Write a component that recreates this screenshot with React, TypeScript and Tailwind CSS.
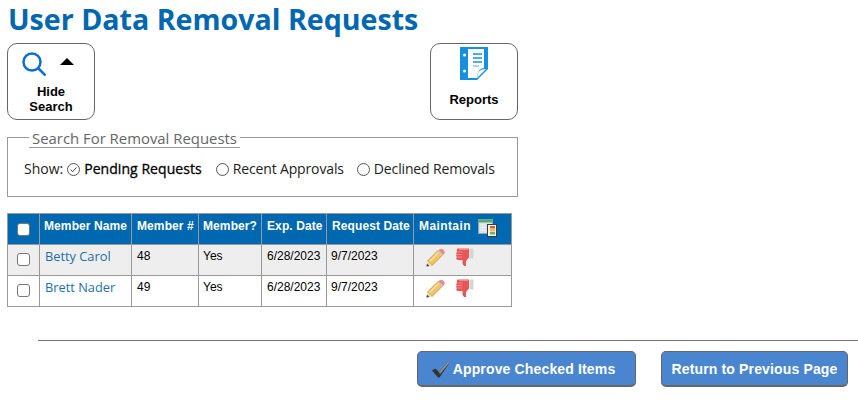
import React from "react";

const FilterOption = ({ label, checked }: { label: string; checked?: boolean }) => (
  <span className="flex items-center">
    <span className="relative w-[13px] h-[13px] rounded-full border border-[#555] mr-[4px] flex items-center justify-center">
      {checked && (
        <svg viewBox="0 0 13 13" className="absolute -left-px -top-px w-[13px] h-[13px]">
          <path d="M3.6 6.6l2 2.2 3.9-4.4" fill="none" stroke="#444" strokeWidth="1" />
        </svg>
      )}
    </span>
    <span className={checked ? "text-black [-webkit-text-stroke:0.3px_black] tracking-[0.05px]" : "text-[#222] tracking-[-0.14px]"}>{label}</span>
  </span>
);

const Pencil = () => (
  <svg viewBox="0 0 19 19" className="w-[19px] h-[19px]">
    <path d="M1.500 13L12 2.500l4.500 4.500L6 17.500z" fill="#f3c364" stroke="#b98a3a" strokeWidth="0.8" />
    <path d="M3.500 13.500L13 4" stroke="#fbe3a8" strokeWidth="1.400" />
    <path d="M13.500 1.500c1-1 2.500-1 3.500 0l1 1c1 1 1 2.500 0 3.500l-1 1-4.500-4.500z" fill="#ee8a8a" />
    <path d="M11.800 2.800l4.500 4.500" stroke="#c8c8c8" strokeWidth="1.600" />
    <path d="M1.500 13L.5 18.500 6 17.500z" fill="#ead9b4" />
    <path d="M1 15.800L.5 18.500l2.800-.5z" fill="#333" />
  </svg>
);

const ThumbDown = () => (
  <svg viewBox="0 0 18 19" className="w-[18px] h-[19px]">
    <path d="M13.500 0.500h4v10h-4z" fill="#d4d6d4" />
    <path d="M1.500 0.500H13V9.500l-3 3.500V18H8.500c-1.200-.5-2-1.700-2-3V12H2c-1.200 0-2-1-1.600-2l.4-1C0 8 0 7 .7 6.500 0 5.500.2 4.500 1 4c-.5-1-.2-2.500.5-3.500z" fill="#e85656" />
    <path d="M1.500 4h5M1 6.500h5M1 9h5" stroke="#f39a9a" strokeWidth="0.8" />
    <path d="M3 1.500h9" stroke="#f28c8c" strokeWidth="1" />
  </svg>
);

const ReportIcon = () => (
  <svg viewBox="0 0 28 33" className="w-[28px] h-[33px]">
    <path d="M0 0h28v22L17 33H0z" fill="#1590e3" />
    <path d="M8 2h16v19c-4 0-7 4-7 10H8z" fill="#fff" />
    <path d="M17 31c0-6 3-9 9-9z" fill="#fff" />
    <circle cx="4.500" cy="8" r="1.500" fill="#fff" />
    <circle cx="4.500" cy="24" r="1.500" fill="#fff" />
    <path d="M13 7h9M13 11h9M13 15h9" stroke="#1590e3" strokeWidth="1.500" />
    <path d="M13 19h6" stroke="#8cc8f0" strokeWidth="1.500" />
  </svg>
);

const TableIcon = () => (
  <svg viewBox="0 0 19 18" className="w-[19px] h-[18px]">
    <rect x="0.500" y="0.500" width="14" height="14" fill="#d5e2ea" stroke="#8fa8b5" />
    <rect x="0.500" y="0.500" width="14" height="3" fill="#58a868" />
    <path d="M2.500 6h5M2.500 8.500h5M2.500 11h5" stroke="#f4f8fa" strokeWidth="1" />
    <rect x="9.500" y="5.500" width="9" height="12" fill="#f3f3e8" stroke="#3a3a3a" />
    <rect x="12" y="7" width="5" height="2.500" fill="#d9584f" />
    <rect x="12" y="10" width="5" height="2.500" fill="#eec440" />
    <rect x="12" y="13" width="5" height="2.500" fill="#6db36c" />
  </svg>
);

const CheckMark = () => (
  <svg viewBox="0 0 18 17" className="w-[18px] h-[17px]">
    <path d="M0 9.500l3.500-2 3.500 3.500L16.500 0 18 1 7.500 16.500H6z" fill="#333" />
    <path d="M7 11L16.500 0 18 1 8 13z" fill="#8f8f8f" />
  </svg>
);

const Box = () => (
  <span className="block w-[13px] h-[13px] rounded-[3px] border border-[#767676] bg-white" />
);

const rows = [
  { name: "Betty Carol", num: "48", shaded: true },
  { name: "Brett Nader", num: "49", shaded: false },
];

const th = "border border-[#999] align-top text-left font-bold text-white text-[12px] tracking-[0.1px] leading-[14px] whitespace-nowrap pt-[5px] px-[4px]";
const td = "border border-[#999] align-top text-black text-[12px] leading-[14px] pt-[4px] px-[5px]";

export default function App() {
  return (
    <div className="w-[858px] h-[409px] bg-white overflow-hidden font-['Liberation_Sans',sans-serif]">
      <h1 className="pl-[8px] h-[43px] font-['Open_Sans',sans-serif] font-bold text-[28.6px] leading-[38px] whitespace-nowrap text-[#0067b1]">
        User Data Removal Requests
      </h1>

      <div className="flex justify-between w-[511px] ml-[7px] h-[77px]">
        <button className="w-[88px] h-[77px] rounded-[10px] border border-[#666] flex flex-col items-center text-[13px] leading-[15px] font-bold text-black">
          <span className="flex items-center h-[36px] mt-[2px] ml-[-7px]">
            <svg viewBox="0 0 24 24" className="w-[24px] h-[24px]" fill="none" stroke="#0b6fd0" strokeWidth="2.500">
              <circle cx="10" cy="10" r="8.500" />
              <path d="M15.500 15.500L23.500 23.500" />
            </svg>
            <span className="ml-[14px] mb-[5px] w-0 h-0 border-x-[7.500px] border-x-transparent border-b-[7px] border-b-black" />
          </span>
          <span className="mt-[2px]">Hide<br />Search</span>
        </button>
        <button className="w-[88px] h-[77px] rounded-[10px] border border-[#666] flex flex-col items-center text-[13px] leading-[15px] font-bold text-black">
          <span className="mt-[3px] h-[33px]"><ReportIcon /></span>
          <span className="mt-[12px]">Reports</span>
        </button>
      </div>

      <fieldset className="mt-[7px] ml-[7px] w-[511px] h-[70px] border border-[#999] pl-[16px] font-['Open_Sans',sans-serif]">
        <legend className="ml-[5px] px-[3px] h-[20px] leading-[22px] text-[14.9px] text-[#666] border-b border-[#999] box-content">
          Search For Removal Requests
        </legend>
        <div className="flex items-center mt-[11px] text-[14px] leading-[20px] text-[#222]">
          <span className="mr-[4px]">Show:</span>
          <FilterOption label="Pending Requests" checked />
          <span className="w-[14px]" />
          <FilterOption label="Recent Approvals" />
          <span className="w-[13px]" />
          <FilterOption label="Declined Removals" />
        </div>
      </fieldset>

      <table className="mt-[16px] ml-[7px] border-collapse table-fixed w-[505px]">
        <colgroup>
          <col className="w-[32px]" />
          <col className="w-[92px]" />
          <col className="w-[67px]" />
          <col className="w-[63px]" />
          <col className="w-[65px]" />
          <col className="w-[87px]" />
          <col className="w-[98px]" />
        </colgroup>
        <thead>
          <tr className="h-[31px] bg-[#0067b1]">
            <th className={th + " !pt-[9px] !px-[9px]"}><Box /></th>
            <th className={th}>Member Name</th>
            <th className={th + " !px-[5px]"}>Member #</th>
            <th className={th}>Member?</th>
            <th className={th + " !px-[5px]"}>Exp. Date</th>
            <th className={th + " !px-[5px]"}>Request Date</th>
            <th className={th + " !px-[5px]"}>
              <span className="flex items-start">
                <span className="tracking-[0.4px]">Maintain</span>
                <span className="ml-[7px]"><TableIcon /></span>
              </span>
            </th>
          </tr>
        </thead>
        <tbody>
          {rows.map((r) => (
            <tr key={r.num} className={"h-[31px] " + (r.shaded ? "bg-[#eeeeee]" : "bg-white")}>
              <td className={td + " !pt-[8px] !px-[9px]"}><Box /></td>
              <td className={td + " !pt-[4px] !px-[5px] font-['Open_Sans',sans-serif] !text-[12.800px] !text-[#1f6fa8]"}>
                <a href="#">{r.name}</a>
              </td>
              <td className={td}>{r.num}</td>
              <td className={td + " !px-[4px]"}>Yes</td>
              <td className={td}>6/28/2023</td>
              <td className={td + " !px-[4px]"}>9/7/2023</td>
              <td className={td + " !pt-[3px] !px-[12px]"}>
                <span className="flex gap-[11px]">
                  <Pencil />
                  <ThumbDown />
                </span>
              </td>
            </tr>
          ))}
        </tbody>
      </table>

      <div className="mt-[33px] ml-[38px] border-t border-[#777] h-[11px]" />

      <div className="flex ml-[417px] gap-[25px]">
        <button className="w-[219px] h-[36px] pt-px pr-[6px] rounded-[5px] bg-[#4a86d0] border border-[#666] border-b-2 flex items-center justify-center text-white font-bold text-[14px] tracking-[0.15px]">
          <CheckMark />
          <span className="ml-[3px]">Approve Checked Items</span>
        </button>
        <button className="w-[187px] h-[36px] pt-px rounded-[5px] bg-[#4a86d0] border border-[#666] border-b-2 flex items-center justify-center text-white font-bold text-[14px] tracking-[0.15px]">
          Return to Previous Page
        </button>
      </div>
    </div>
  );
}
